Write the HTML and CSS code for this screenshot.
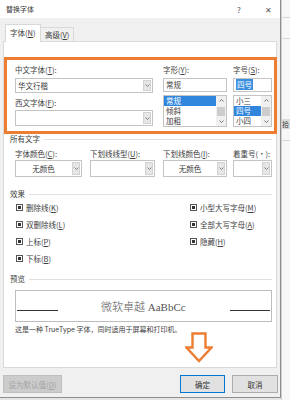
FILE: index.html
```html
<!DOCTYPE html>
<html>
<head>
<meta charset="utf-8">
<title>替换字体</title>
<link rel="stylesheet" href="styles.css">
</head>
<body>
<div class="screen">
  <div class="dialog">
    <div class="titlebar">
      <span class="title">替换字体</span>
      <span class="help">?</span>
      <span class="close">✕</span>
    </div>

    <div class="tabs">
      <div class="tab active">字体(<u>N</u>)</div>
      <div class="tab">高级(<u>V</u>)</div>
    </div>

    <div class="panel">
      <div class="fontbox">
        <div class="col col-name">
          <label>中文字体(<u>T</u>):</label>
          <div class="combo"><span class="val">华文行楷</span><span class="drop"><svg width="5" height="3" viewBox="0 0 5 3"><path d="M0.5 0.5 L2.5 2.5 L4.5 0.5" fill="none" stroke="#777" stroke-width="0.9"/></svg></span></div>
          <label class="second">西文字体(<u>F</u>):</label>
          <div class="combo tall"><span class="val"></span><span class="drop"><svg width="5" height="3" viewBox="0 0 5 3"><path d="M0.5 0.5 L2.5 2.5 L4.5 0.5" fill="none" stroke="#777" stroke-width="0.9"/></svg></span></div>
        </div>
        <div class="col col-style">
          <label>字形(<u>Y</u>):</label>
          <div class="field">常规</div>
          <div class="list">
            <div class="items">
              <div class="item sel">常规</div>
              <div class="item">倾斜</div>
              <div class="item">加粗</div>
            </div>
            <div class="scroll">
              <svg width="5" height="3" viewBox="0 0 5 3"><path d="M0.5 2.5 L2.5 0.5 L4.5 2.5" fill="none" stroke="#666" stroke-width="0.9"/></svg>
              <span class="thumb"></span>
              <svg width="5" height="3" viewBox="0 0 5 3"><path d="M0.5 0.5 L2.5 2.5 L4.5 0.5" fill="none" stroke="#666" stroke-width="0.9"/></svg>
            </div>
          </div>
        </div>
        <div class="col col-size">
          <label>字号(<u>S</u>):</label>
          <div class="field"><span class="hl">四号</span></div>
          <div class="list">
            <div class="items">
              <div class="item">小三</div>
              <div class="item sel">四号</div>
              <div class="item">小四</div>
            </div>
            <div class="scroll">
              <svg width="5" height="3" viewBox="0 0 5 3"><path d="M0.5 2.5 L2.5 0.5 L4.5 2.5" fill="none" stroke="#666" stroke-width="0.9"/></svg>
              <span class="thumb"></span>
              <svg width="5" height="3" viewBox="0 0 5 3"><path d="M0.5 0.5 L2.5 2.5 L4.5 0.5" fill="none" stroke="#666" stroke-width="0.9"/></svg>
            </div>
          </div>
        </div>
      </div>

      <div class="section">所有文字</div>
      <div class="colors">
        <div class="cell">
          <label>字体颜色(<u>C</u>):</label>
          <div class="combo c1"><span class="val center">无颜色</span><span class="drop"><svg width="5" height="3" viewBox="0 0 5 3"><path d="M0.5 0.5 L2.5 2.5 L4.5 0.5" fill="none" stroke="#777" stroke-width="0.9"/></svg></span></div>
        </div>
        <div class="cell">
          <label>下划线线型(<u>U</u>):</label>
          <div class="combo c2"><span class="val"></span><span class="drop"><svg width="5" height="3" viewBox="0 0 5 3"><path d="M0.5 0.5 L2.5 2.5 L4.5 0.5" fill="none" stroke="#777" stroke-width="0.9"/></svg></span></div>
        </div>
        <div class="cell">
          <label>下划线颜色(<u>I</u>):</label>
          <div class="combo c3"><span class="val center">无颜色</span><span class="drop"><svg width="5" height="3" viewBox="0 0 5 3"><path d="M0.5 0.5 L2.5 2.5 L4.5 0.5" fill="none" stroke="#777" stroke-width="0.9"/></svg></span></div>
        </div>
        <div class="cell">
          <label>着重号(·):</label>
          <div class="combo c4"><span class="val"></span><span class="drop"><svg width="5" height="3" viewBox="0 0 5 3"><path d="M0.5 0.5 L2.5 2.5 L4.5 0.5" fill="none" stroke="#777" stroke-width="0.9"/></svg></span></div>
        </div>
      </div>

      <div class="section">效果</div>
      <div class="effects">
        <div class="check"><span class="box"></span>删除线(<u>K</u>)</div>
        <div class="check"><span class="box"></span>小型大写字母(<u>M</u>)</div>
        <div class="check"><span class="box"></span>双删除线(<u>L</u>)</div>
        <div class="check"><span class="box"></span>全部大写字母(<u>A</u>)</div>
        <div class="check"><span class="box"></span>上标(<u>P</u>)</div>
        <div class="check"><span class="box"></span>隐藏(<u>H</u>)</div>
        <div class="check"><span class="box"></span>下标(<u>B</u>)</div>
      </div>

      <div class="section">预览</div>
      <div class="preview">
        <span class="rule left"></span>
        <span class="sample">微软卓越 AaBbCc</span>
        <span class="rule right"></span>
      </div>
      <div class="note">这是一种 TrueType 字体，同时适用于屏幕和打印机。</div>

      <svg class="arrow" width="28" height="31" viewBox="0 0 28 31">
        <polygon points="7.5,1.5 20.5,1.5 20.5,15.5 26.5,15.5 14,29 1.5,15.5 7.5,15.5" fill="#fff" stroke="#ed7d31" stroke-width="2.4" stroke-linejoin="miter"/>
      </svg>
    </div>

    <div class="footer">
      <button class="btn disabled">设为默认值(<u>D</u>)</button>
      <span class="spacer"></span>
      <button class="btn ok">确定</button>
      <button class="btn cancel">取消</button>
    </div>
  </div>

  <div class="side">
    <div class="side-line l1"></div>
    <div class="side-line l2"></div>
    <div class="side-tab">拾</div>
    <div class="side-line l3"></div>
  </div>
</div>
</body>
</html>
```

FILE: styles.css
```css
* { box-sizing: border-box; }

body {
  margin: 0;
  font-family: "Noto Sans CJK SC", "Noto Sans", sans-serif;
  font-size: 7.5px;
  color: #404040;
  background: #e6e6e6;
}

u { text-decoration: underline; }

.screen { display: flex; width: 290px; height: 400px; overflow: hidden; }

.dialog {
  width: 281px;
  height: 398px;
  flex: none;
  display: flex;
  flex-direction: column;
  background: #f0f0f0;
  border-right: 1px solid #8e8e8e;
  border-bottom: 1px solid #8e8e8e;
}

/* title bar */
.titlebar { height: 18px; background: #fff; display: flex; align-items: center; padding: 0 7px 0 6px; }
.title { flex: 1; font-size: 7px; color: #333; }
.help { width: 10px; text-align: center; margin-right: 19px; font-size: 8px; color: #555; }
.close { width: 10px; text-align: center; font-size: 8px; color: #555; }

/* tabs */
.tabs { height: 23px; display: flex; align-items: flex-end; padding-left: 5px; }
.tab {
  height: 14px;
  padding: 0 4px;
  line-height: 13px;
  border: 1px solid #d9d9d9;
  border-bottom: none;
  border-left: none;
}
.tab.active {
  height: 18px;
  width: 36px;
  line-height: 15px;
  background: #fff;
  border-left: 1px solid #d9d9d9;
  margin-bottom: -1px;
  position: relative;
  z-index: 1;
}

/* main panel */
.panel {
  position: relative;
  height: 327px;
  margin-left: 3px;
  width: 274px;
  background: #fff;
  border: 1px solid #d9d9d9;
  padding: 15px 4px 0 6px;
}

.fontbox {
  margin-left: -6px;
  width: 273px;
  height: 77px;
  border: 3px solid #ed7d31;
  padding: 5px 0 0 8px;
  display: grid;
  grid-template-columns: 148px 70px 39px;
}

label { display: block; height: 10px; line-height: 10px; white-space: nowrap; }

.combo {
  display: flex;
  height: 15px;
  border: 1px solid #c4c4c4;
  background: #fff;
}
.col-name .combo { width: 138px; margin-top: 3px; }
.col-name .combo.tall { height: 16px; margin-top: 2px; }
.col-name .second { margin-top: 5px; }
.val { flex: 1; padding-left: 2px; line-height: 13px; white-space: nowrap; }
.val.center { text-align: center; padding-left: 0; }
.drop {
  width: 8px;
  margin: 1px;
  background: #e6e6e6;
  border: 1px solid #d2d2d2;
  display: flex;
  align-items: center;
  justify-content: center;
}

.field {
  height: 14px;
  margin-top: 3px;
  border: 1px solid #c4c4c4;
  padding-left: 2px;
  line-height: 12px;
}
.col-style .field, .col-style .list { width: 64px; }
.col-size .field, .col-size .list { width: 39px; }
.hl { background: #3b8fdf; color: #fff; padding: 0 1px; }

.list {
  display: flex;
  height: 32px;
  margin-top: 3px;
  border: 1px solid #c4c4c4;
}
.items { flex: 1; }
.item { height: 10px; line-height: 10px; padding-left: 2px; white-space: nowrap; }
.item.sel { background: #2f86dc; color: #fff; }
.scroll {
  width: 10px;
  background: #f0f0f0;
  display: flex;
  flex-direction: column;
  align-items: center;
  justify-content: space-between;
  padding: 3px 0;
}
.thumb { width: 8px; height: 9px; background: #cdcdcd; }

/* section headers */
.section {
  display: flex;
  align-items: center;
  height: 10px;
  line-height: 10px;
}
.section::after { content: ""; flex: 1; height: 1px; background: #e0e0e0; margin-left: 4px; }

.colors {
  display: grid;
  grid-template-columns: 75px 73px 70px 39px;
  margin: 5px 0 0 5px;
}
.colors .combo { height: 17px; margin-top: 1px; }
.colors .val { line-height: 15px; }
.c1 { width: 67px; }
.c2 { width: 65px; }
.c3 { width: 64px; }
.c4 { width: 39px; }

.colors + .section { margin-top: 12px; }

.effects {
  display: grid;
  grid-template-columns: 174px 90px;
  grid-auto-rows: 17px;
  margin-left: 6px;
}
.check { display: flex; align-items: center; white-space: nowrap; }
.box {
  width: 7px;
  height: 7px;
  margin-right: 3px;
  border: 1px solid #555;
  background: #333;
  box-shadow: inset 0 0 0 1px #fff;
}

.effects + .section { margin-top: 7px; }

.preview {
  display: flex;
  align-items: center;
  margin: 6px 0 0 5px;
  width: 257px;
  height: 32px;
  border: 1px solid #bdbdbd;
  padding: 0 1px;
}
.rule { height: 1px; background: #333; margin-top: 9px; }
.rule.left { width: 41px; }
.rule.right { width: 40px; margin-left: auto; }
.sample {
  margin-left: 43px;
  font-family: "Liberation Serif", "Noto Sans CJK SC", serif;
  font-size: 11px;
  font-weight: 300;
  color: #555;
  white-space: nowrap;
}

.note { margin: 2px 0 0 5px; height: 10px; line-height: 10px; white-space: nowrap; font-size: 7px; }

.arrow { position: absolute; left: 181px; top: 290px; }

/* footer buttons */
.footer { display: flex; align-items: flex-start; padding: 7px 2px 0 3px; flex: 1; }
.spacer { flex: 1; }
.btn {
  height: 18px;
  font-family: inherit;
  font-size: 7.5px;
  color: #333;
  background: #e1e1e1;
  border: 1px solid #adadad;
  padding: 0;
}
.btn.disabled { width: 59px; background: #cccccc; border-color: #bfbfbf; color: #a3a3a3; }
.btn.ok { width: 45px; border-color: #0078d7; margin-right: 7px; }
.btn.cancel { width: 46px; }

/* window behind */
.side { flex: 1; position: relative; background: #f7f7f7; border-left: 1px solid #cfcfcf; }
.side-line { position: absolute; left: 0; right: 0; height: 1px; background: #d6d6d6; }
.l1 { top: 17px; }
.l2 { top: 38px; }
.l3 { top: 140px; }
.side-tab { position: absolute; left: 0; right: 0; top: 119px; height: 10px; background: #dcdcdc; font-size: 7px; line-height: 10px; overflow: hidden; }
```
